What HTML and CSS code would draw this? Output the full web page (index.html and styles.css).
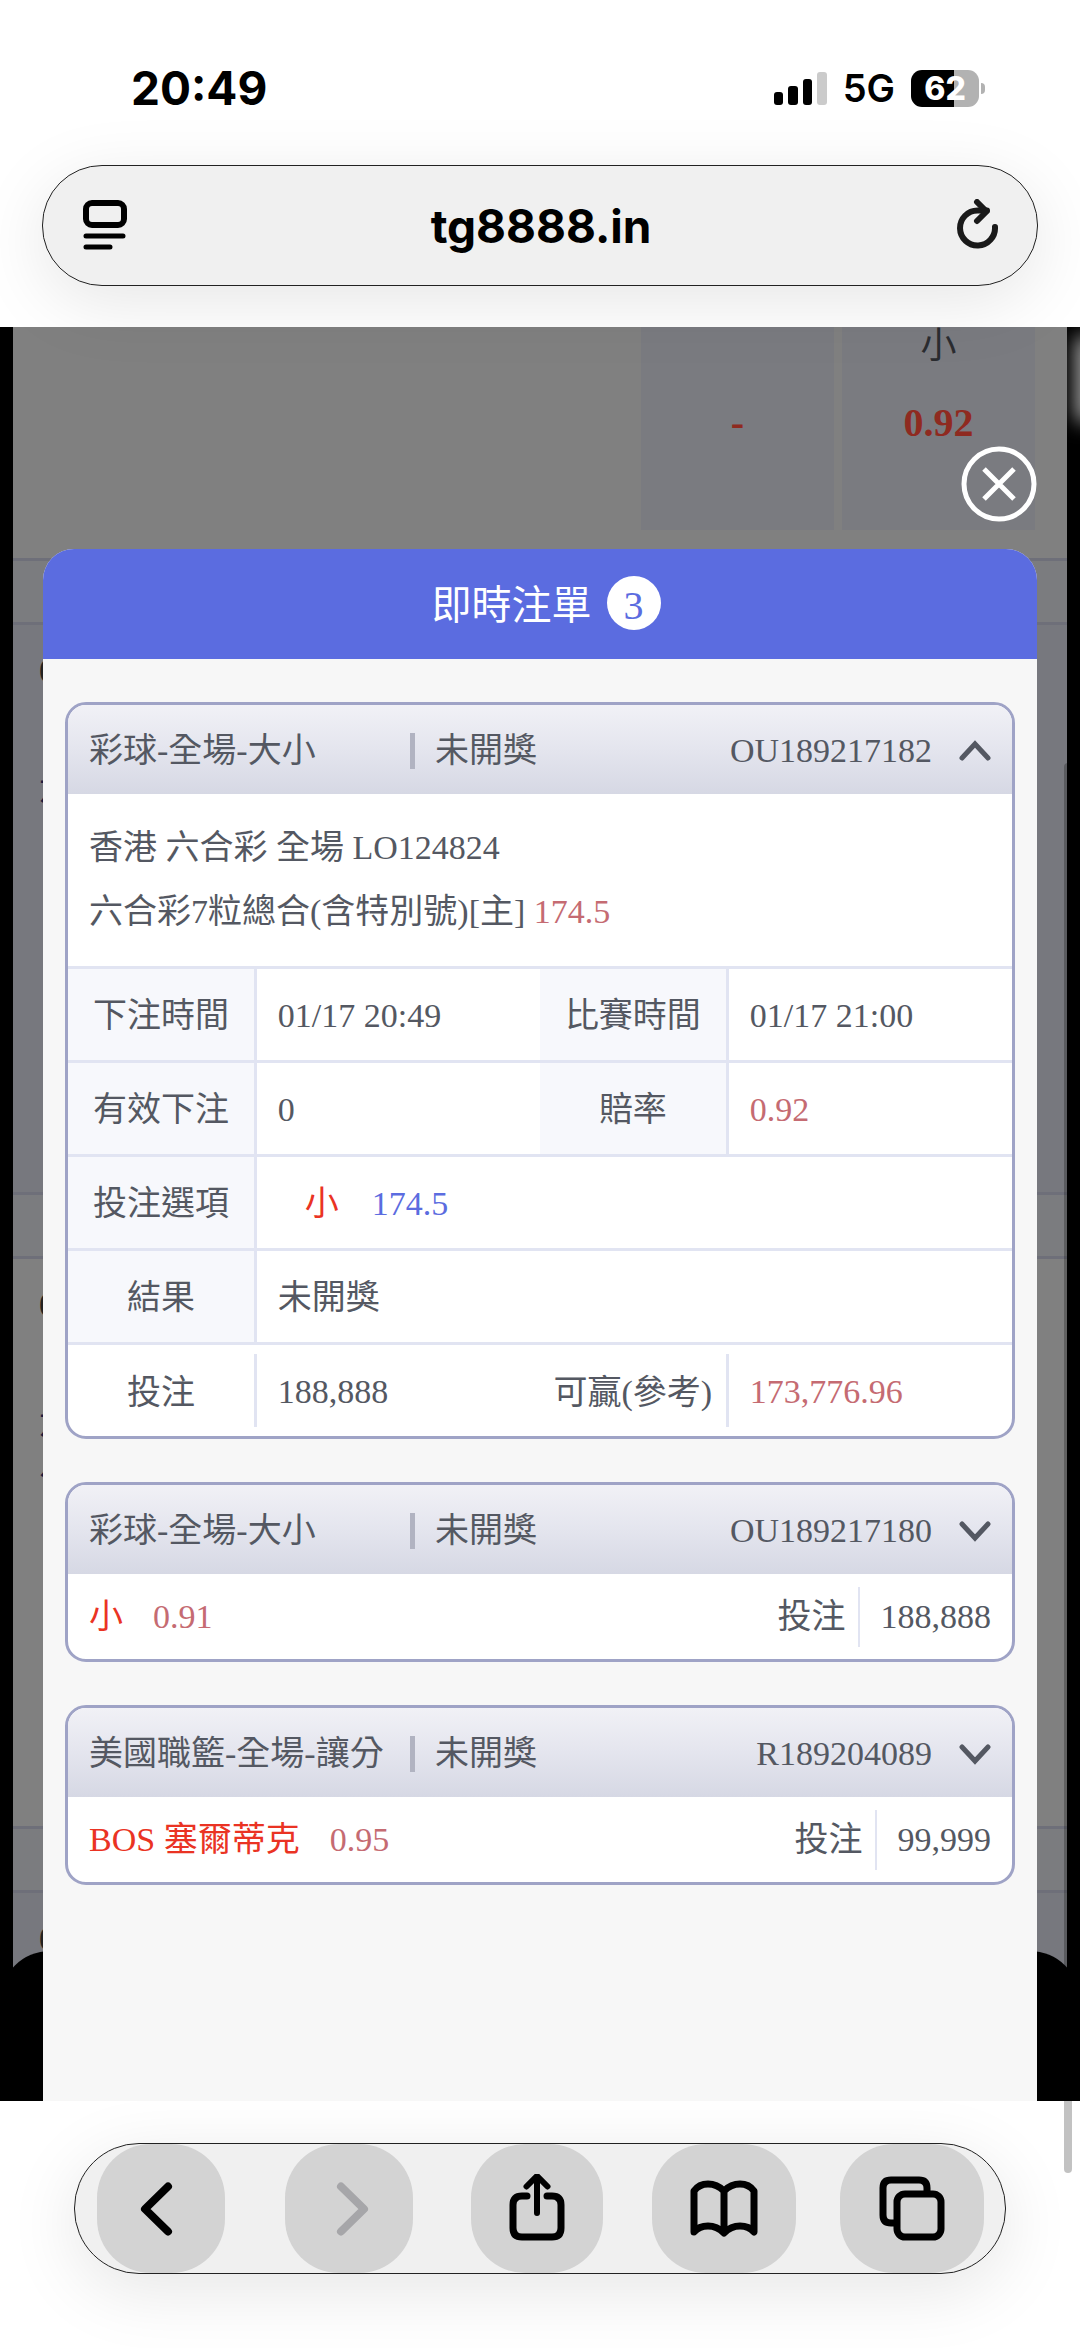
FILE: index.html
```html
<!DOCTYPE html>
<html lang="zh-Hant">
<head>
<meta charset="utf-8">
<meta name="viewport" content="width=device-width, initial-scale=1">
<title>即時注單</title>
<link rel="stylesheet" href="styles.css">
</head>
<body>
<div class="browser">
  <header class="chrome-top">
    <div class="status-bar">
      <time class="clock">20:49</time>
      <div class="status-icons">
        <svg class="signal" width="53" height="33" viewBox="0 0 53 33" aria-hidden="true">
          <rect x="0" y="20" width="9" height="13" rx="3"/>
          <rect x="14" y="14" width="10" height="19" rx="3"/>
          <rect x="29" y="7" width="9" height="26" rx="3"/>
          <rect x="43" y="0" width="10" height="33" rx="3" fill="#cbcbcb"/>
        </svg>
        <span class="network">5G</span>
        <span class="battery"><span class="battery-level">62</span></span>
      </div>
    </div>
    <div class="address-bar">
      <button class="icon-button" type="button" aria-label="閱讀器">
        <svg width="46" height="54" viewBox="0 0 46 54" fill="none" stroke="#000" stroke-width="6" stroke-linecap="round">
          <rect x="3" y="4" width="38" height="22" rx="6"/>
          <path d="M3 37H40M3 48H27" stroke-width="5"/>
        </svg>
      </button>
      <span class="host">tg8888.in</span>
      <button class="icon-button" type="button" aria-label="重新載入">
        <svg width="42" height="54" viewBox="0 0 42 54" fill="none" stroke="#1a1a1a" stroke-width="6" stroke-linecap="round" stroke-linejoin="round">
          <path d="M38 28A17.500 17.500 0 1 1 20.500 11.500H30"/>
          <path d="M20 3L29.500 12.500L20 22"/>
        </svg>
      </button>
    </div>
  </header>

  <main class="web-view">
    <div class="backdrop" aria-hidden="true">
      <div class="side-glow"></div>
      <div class="backdrop-page">
        <div class="odds-row">
          <div class="odds-cell"><span class="odds-name"></span><b>-</b></div>
          <div class="odds-cell"><span class="odds-name">小</span><b>0.92</b></div>
        </div>
        <div class="stripe"></div>
        <div class="match match-shaded"><span class="match-time">01/17</span><span class="match-team">六合彩</span></div>
        <div class="stripe"></div>
        <div class="match"><span class="match-time">01/17</span><span class="match-team">六合彩<br>足球</span></div>
        <div class="stripe"></div>
        <div class="match match-shaded"><span class="match-time">01/17</span></div>
      </div>
      <div class="bottom-sheet"></div>
    </div>

    <section class="modal">
      <button class="close" type="button" aria-label="關閉">
        <svg width="76" height="76" viewBox="0 0 76 76" fill="none" stroke="#fff" stroke-width="5">
          <circle cx="38" cy="38" r="35"/>
          <path d="M23 23L53 53M53 23L23 53"/>
        </svg>
      </button>
      <div class="panel">
        <h1 class="panel-title">即時注單 <span class="count">3</span></h1>
        <div class="tickets">

          <article class="ticket">
            <button class="ticket-head" type="button" aria-expanded="true">
              <span class="ticket-type">彩球-全場-大小</span>
              <span class="ticket-status">未開獎</span>
              <span class="ticket-id">OU189217182</span>
              <svg width="32" height="22" viewBox="0 0 32 22" fill="none" stroke="#545862" stroke-width="5" stroke-linecap="round"><path d="M3 18L16 4L29 18"/></svg>
            </button>
            <div class="ticket-info">
              <p>香港 六合彩 全場 LO124824</p>
              <p>六合彩7粒總合(含特別號)[主] <span class="rose">174.5</span></p>
            </div>
            <table class="ticket-table">
              <tbody>
                <tr>
                  <th scope="row">下注時間</th><td>01/17 20:49</td>
                  <th scope="row">比賽時間</th><td>01/17 21:00</td>
                </tr>
                <tr>
                  <th scope="row">有效下注</th><td>0</td>
                  <th scope="row">賠率</th><td class="rose">0.92</td>
                </tr>
                <tr>
                  <th scope="row">投注選項</th>
                  <td colspan="3"><span class="pick red">小</span><span class="blue">174.5</span></td>
                </tr>
                <tr>
                  <th scope="row">結果</th><td colspan="3">未開獎</td>
                </tr>
                <tr class="total">
                  <th scope="row"><span>投注</span></th><td>188,888</td>
                  <th scope="row"><span>可贏(參考)</span></th><td class="rose">173,776.96</td>
                </tr>
              </tbody>
            </table>
          </article>

          <article class="ticket">
            <button class="ticket-head" type="button" aria-expanded="false">
              <span class="ticket-type">彩球-全場-大小</span>
              <span class="ticket-status">未開獎</span>
              <span class="ticket-id">OU189217180</span>
              <svg width="32" height="22" viewBox="0 0 32 22" fill="none" stroke="#545862" stroke-width="5" stroke-linecap="round"><path d="M3 4L16 18L29 4"/></svg>
            </button>
            <div class="ticket-summary">
              <span class="red">小</span>
              <span class="odds rose">0.91</span>
              <span class="stake-label">投注</span>
              <span class="stake">188,888</span>
            </div>
          </article>

          <article class="ticket">
            <button class="ticket-head" type="button" aria-expanded="false">
              <span class="ticket-type">美國職籃-全場-讓分</span>
              <span class="ticket-status">未開獎</span>
              <span class="ticket-id">R189204089</span>
              <svg width="32" height="22" viewBox="0 0 32 22" fill="none" stroke="#545862" stroke-width="5" stroke-linecap="round"><path d="M3 4L16 18L29 4"/></svg>
            </button>
            <div class="ticket-summary">
              <span class="red">BOS 塞爾蒂克</span>
              <span class="odds rose">0.95</span>
              <span class="stake-label">投注</span>
              <span class="stake">99,999</span>
            </div>
          </article>

        </div>
      </div>
    </section>
  </main>

  <footer class="chrome-bottom">
    <nav class="toolbar">
      <button class="tool tool-small" type="button" aria-label="上一頁">
        <svg width="70" height="70" viewBox="0 0 70 70"><path d="M42 12.500L19 35L42 57.500" stroke-width="8"/></svg>
      </button>
      <button class="tool tool-small" type="button" aria-label="下一頁" disabled>
        <svg width="70" height="70" viewBox="0 0 70 70"><path d="M27 12.500L50 35L27 57.500" stroke-width="8"/></svg>
      </button>
      <button class="tool tool-medium" type="button" aria-label="分享">
        <svg width="70" height="70" viewBox="0 0 70 70"><path d="M25 22H20Q11 22 11 31V54Q11 63 20 63H50Q59 63 59 54V31Q59 22 50 22H45"/><path d="M35 39V3M24.500 12.500L35 2L45.500 12.500" stroke-width="6"/></svg>
      </button>
      <button class="tool" type="button" aria-label="書籤">
        <svg width="70" height="70" viewBox="0 0 70 70"><path d="M35 17Q28 10 19 10Q10 10 5 17V58Q10 52 19 52Q28 52 35 59Q42 52 51 52Q60 52 65 58V17Q60 10 51 10Q42 10 35 17V58"/></svg>
      </button>
      <button class="tool" type="button" aria-label="分頁">
        <svg width="70" height="70" viewBox="0 0 70 70"><rect x="20" y="20" width="44" height="43" rx="8"/><path d="M19 49H14Q6 49 6 41V14Q6 6 14 6H42Q50 6 50 14V19"/></svg>
      </button>
    </nav>
  </footer>
  <div class="scroll-thumb"></div>
</div>
</body>
</html>
```
FILE: styles.css
```css
* {
  box-sizing: border-box;
}

body {
  margin: 0;
  background: #fff;
  color: #545862;
  font: 34px/40px "Liberation Serif", "Noto Sans CJK TC", serif;
}

button {
  margin: 0;
  padding: 0;
  border: 0;
  background: none;
  color: inherit;
  font: inherit;
}

svg {
  display: block;
  flex: none;
}

h1,
p {
  margin: 0;
}

.red { color: #ea3323; }
.rose { color: #c56b72; }
.blue { color: #5b6ce0; }

.browser {
  position: relative;
  display: flex;
  flex-direction: column;
  min-height: 100vh;
  overflow: hidden;
}

/* Browser chrome, top */
.chrome-top {
  position: relative;
  z-index: 1;
  padding: 66px 42px 41px;
  color: #000;
  font-family: Inter, "Noto Sans CJK TC", sans-serif;
  font-weight: 600;
}

.status-bar {
  display: flex;
  align-items: center;
  justify-content: space-between;
  height: 44px;
  margin: 0 53px 55px 89px;
}

.clock {
  font-size: 46px;
  font-weight: 700;
}

.status-icons {
  display: flex;
  align-items: center;
}

.network {
  margin: 0 16px;
  font-size: 38px;
}

.battery {
  position: relative;
  width: 68px;
  margin-right: 6px;
}

.battery::after {
  content: "";
  position: absolute;
  top: 13px;
  right: -6px;
  width: 4px;
  height: 11px;
  border-radius: 0 4px 4px 0;
  background: #b2b2b2;
}

.battery-level {
  display: block;
  height: 37px;
  border-radius: 11px;
  background: linear-gradient(90deg, #000 43px, #b2b2b2 43px);
  color: #fff;
  font-size: 32px;
  font-weight: 800;
  line-height: 37px;
  text-align: center;
}

.address-bar {
  display: flex;
  align-items: center;
  justify-content: space-between;
  height: 121px;
  padding: 0 38px 0 40px;
  border: 1px solid #222;
  border-radius: 60px;
  background: #f0f0f0;
  box-shadow: 0 16px 70px rgba(0, 0, 0, 0.1);
  font-size: 46px;
}

.host {
  padding-right: 4px;
  font-weight: 700;
}

/* Dimmed page behind the modal */
.web-view {
  display: grid;
  flex: 1;
  background: #000;
}

.backdrop,
.modal {
  grid-area: 1 / 1;
}

.backdrop {
  position: relative;
  overflow: hidden;
}

.backdrop-page {
  position: absolute;
  inset: 0 13px;
  background: #808080;
}

.odds-row {
  display: flex;
  justify-content: flex-end;
  gap: 8px;
  height: 231px;
  padding: 0 32px 28px 0;
}

.odds-cell {
  display: flex;
  flex-direction: column;
  align-items: center;
  gap: 36px;
  width: 193px;
  background: #7a7b80;
  color: #8f2a20;
  font-size: 40px;
}

.odds-name {
  height: 40px;
  color: #2b2c30;
  font-size: 36px;
  line-height: 38px;
}

.stripe {
  height: 64px;
  border-top: 3px solid #6e6f79;
  background: #7b7c7f;
}

.match {
  display: flex;
  flex-direction: column;
  gap: 78px;
  height: 570px;
  padding: 26px;
  border-top: 3px solid #6e6f79;
  color: #1b1a3d;
}

.match-shaded {
  background: #77787e;
}

.match-time {
  color: #222;
  font-weight: 700;
}

.side-glow {
  position: absolute;
  top: 16px;
  right: -14px;
  width: 12px;
  height: 72px;
  box-shadow: 0 0 20px 6px #aaa;
}

.bottom-sheet {
  position: absolute;
  bottom: 0;
  width: 100%;
  height: 150px;
  border-radius: 50px 50px 0 0;
  background: #000;
}

/* Modal */
.modal {
  position: relative;
  display: flex;
  flex-direction: column;
  padding: 119px 43px 0;
}

.close {
  align-self: flex-end;
  margin-bottom: 27px;
}

.panel {
  flex: 1;
  border-radius: 31px 31px 0 0;
  background: #f7f7f7;
  overflow: hidden;
}

.panel-title {
  display: flex;
  align-items: center;
  justify-content: center;
  gap: 15px;
  height: 110px;
  padding: 4px 0 0 12px;
  background: #5b6ce0;
  color: #fff;
  font-size: 40px;
  font-weight: 400;
}

.count {
  width: 54px;
  height: 54px;
  margin-bottom: 6px;
  padding-top: 3px;
  border-radius: 50%;
  background: #fff;
  color: #5b6ce0;
  line-height: 54px;
  text-align: center;
}

.tickets {
  display: flex;
  flex-direction: column;
  gap: 43px;
  padding: 43px 22px;
}

.ticket {
  border: 3px solid #9fa3c6;
  border-radius: 21px;
  background: #fff;
  overflow: hidden;
}

.ticket-head {
  display: flex;
  align-items: center;
  width: 100%;
  height: 89px;
  padding: 3px 21px 0;
  background: linear-gradient(#f1f1f6, #e4e5ee 50%, #d6d8e4);
  text-align: left;
}

.ticket-type {
  flex: 0 0 321px;
}

.ticket-status {
  display: flex;
  align-items: center;
  gap: 20px;
}

.ticket-status::before {
  content: "";
  width: 5px;
  height: 36px;
  background: #b1b3c1;
}

.ticket-id {
  margin: 0 27px 0 auto;
}

.ticket-info {
  padding: 22px 21px;
  line-height: 64px;
}

/* Bet details */
.ticket-table {
  width: 100%;
  border-collapse: separate;
  border-spacing: 0;
  table-layout: fixed;
}

.ticket-table th,
.ticket-table td {
  height: 94px;
  padding: 3px 0 0;
  border-top: 3px solid #e1e4f2;
  text-align: left;
}

.ticket-table th {
  width: 20%;
  border-right: 3px solid #e1e4f2;
  background: #f7f8fc;
  font-weight: 400;
  text-align: center;
}

.ticket-table td {
  width: 30%;
  padding-left: 21px;
}

.ticket-table .total th {
  padding-top: 0;
  border-right: 0;
  background: none;
}

.total th span {
  display: block;
  height: 73px;
  padding-top: 2px;
  border-right: 3px solid #e1e4f2;
  line-height: 73px;
}

.pick {
  margin: 0 33px 0 27px;
}

.ticket-summary {
  display: flex;
  align-items: center;
  height: 85px;
  padding: 0 21px;
}

.odds {
  margin: 0 auto 0 30px;
}

.stake-label {
  padding-right: 12px;
  border-right: 2px solid #e1e4f2;
  line-height: 60px;
}

.stake {
  padding-left: 21px;
}

/* Browser chrome, bottom */
.chrome-bottom {
  padding: 42px 74px 74px;
}

.toolbar {
  display: grid;
  grid-template-columns: repeat(5, 144px);
  justify-content: space-between;
  justify-items: center;
  height: 131px;
  padding: 0 21px 0 14px;
  border: 1px solid #222;
  border-radius: 65px;
  background: #f0f0f0;
  box-shadow: 0 16px 70px rgba(0, 0, 0, 0.1);
}

.tool {
  display: grid;
  place-items: center;
  width: 100%;
  border-radius: 54px;
  background: #d3d3d3;
}

.tool-small {
  width: 128px;
}

.tool-medium {
  width: 132px;
}

.tool svg {
  fill: none;
  stroke: #000;
  stroke-width: 7px;
  stroke-linecap: round;
  stroke-linejoin: round;
}

.tool:disabled svg {
  stroke: #a6a6a9;
}

.scroll-thumb {
  position: absolute;
  top: 763px;
  right: 8px;
  bottom: 175px;
  width: 8px;
  border-radius: 4px;
  background: rgba(0, 0, 0, 0.24);
}
```
